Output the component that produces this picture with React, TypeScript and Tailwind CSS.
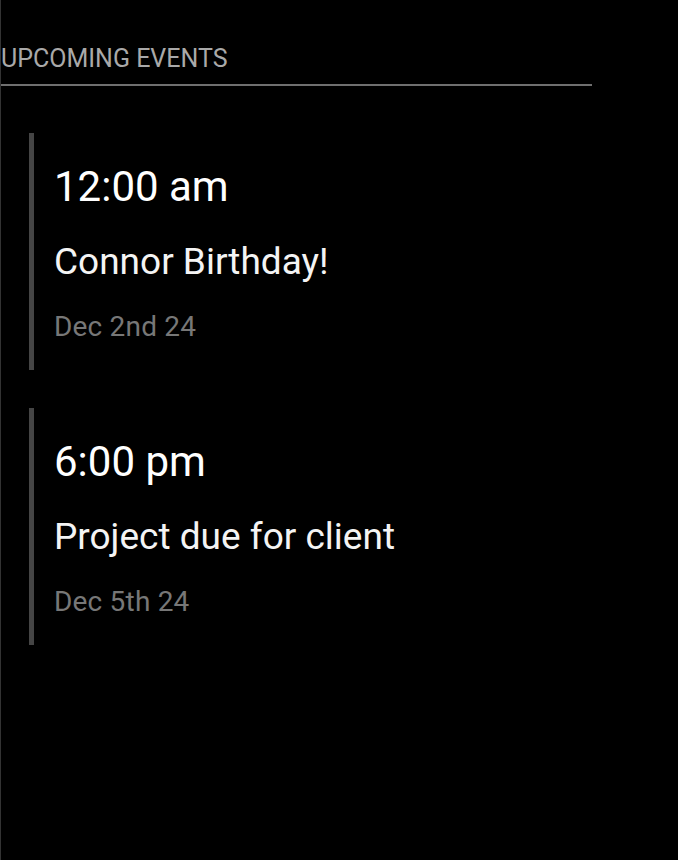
const events = [
  { time: "12:00 am", title: "Connor Birthday!", date: "Dec 2nd 24" },
  { time: "6:00 pm", title: "Project due for client", date: "Dec 5th 24" },
];

export default function App() {
  return (
    <div className="min-h-[860px] w-[678px] bg-black border-l border-[#333] font-['Roboto',sans-serif] antialiased">
      <div className="w-[591px] pt-[46px] pb-[13px] border-b-2 border-[#6f6f6f]">
        <div className="text-[25px] leading-[25px] text-[#a9a9a9]">UPCOMING EVENTS</div>
      </div>

      <div className="flex flex-col gap-[38px] mt-[47px] ml-[28px]">
        {events.map((e) => (
          <div
            key={e.title}
            className="flex flex-col border-l-[5px] border-[#454545] pl-[20px] pt-[33px] pb-[29px]"
          >
            <div className="text-[42px] leading-[42px] text-white">{e.time}</div>
            <div className="mt-[35px] text-[37px] leading-[37px] text-[#f4f4f4]">
              {e.title}
            </div>
            <div className="mt-[33px] text-[28px] leading-[28px] text-[#777] tracking-[0.2px]">
              {e.date}
            </div>
          </div>
        ))}
      </div>
    </div>
  );
}
